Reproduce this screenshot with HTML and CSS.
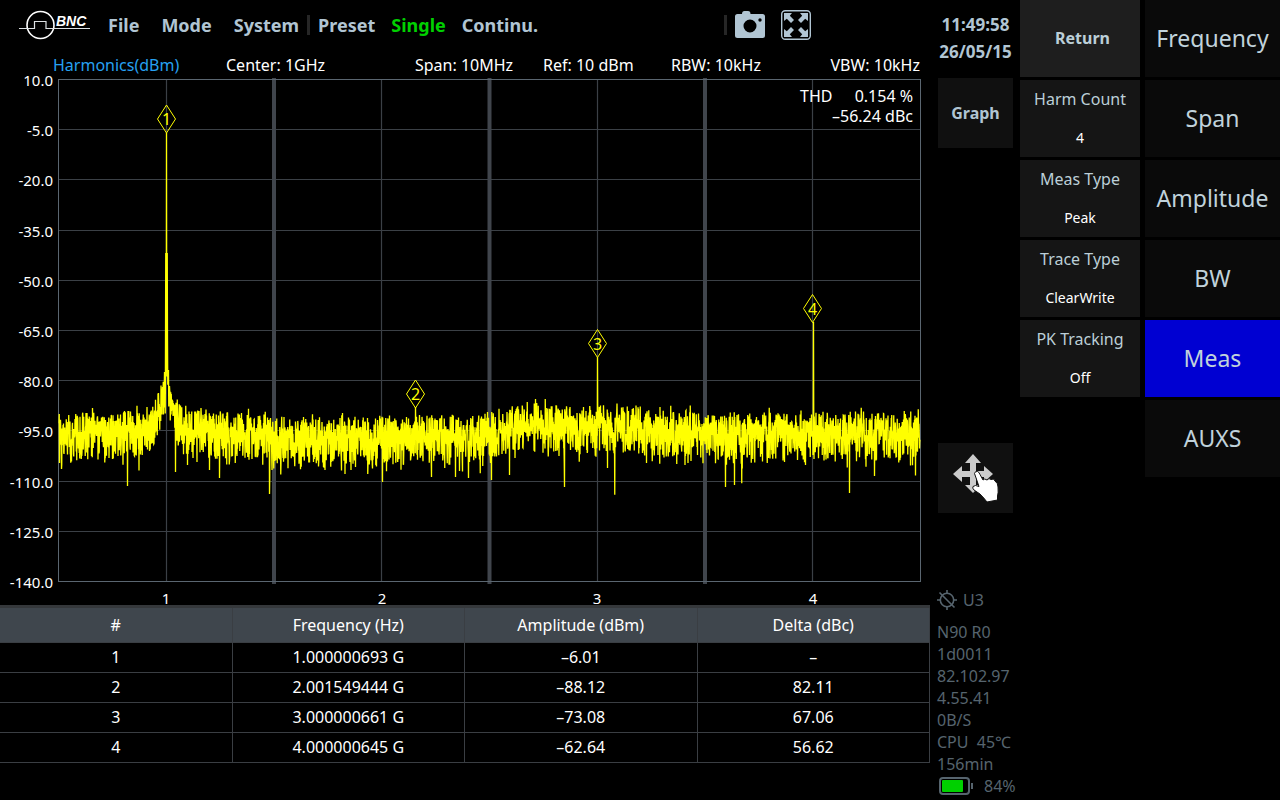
FILE: index.html
```html
<!DOCTYPE html>
<html lang="en">
<head>
<meta charset="utf-8">
<title>Spectrum Analyzer - Harmonics</title>
<link rel="stylesheet" href="styles.css">
</head>
<body>
<div class="analyzer">
  <main class="main">
    <header class="topbar">
      <svg class="logo" width="72" height="30" viewBox="0 0 72 30" role="img" aria-label="BNC">
        <circle cx="21.500" cy="15" r="13.500" fill="none" stroke="#fff" stroke-width="1.600"/>
        <path d="M0 18.500H15.500V11.500H27V18.500H71" fill="none" stroke="#dde1e3" stroke-width="1.200"/>
        <text class="logo-text" x="37" y="16">BNC</text>
      </svg>
      <nav class="menu">
        <button>File</button>
        <button>Mode</button>
        <button>System</button>
      </nav>
      <span class="divider"></span>
      <div class="sweep">
        <button>Preset</button>
        <button class="on">Single</button>
        <button>Continu.</button>
      </div>
      <span class="divider right"></span>
      <button class="icon-button" aria-label="Screenshot">
        <svg width="30" height="30" viewBox="0 0 30 30">
          <path fill="#b1c5d3" fill-rule="evenodd" d="M2.500 4H7Q7 1 9.500 1H13Q15.500 1 15.500 4H27.500Q30 4 30 6.500V25.500Q30 28 27.500 28H2.500Q0 28 0 25.500V6.500Q0 4 2.500 4ZM15 9.500A6.500 6.500 0 1 0 15 22.500A6.500 6.500 0 1 0 15 9.500ZM25 8.300A1.700 1.700 0 1 0 25 11.700A1.700 1.700 0 1 0 25 8.300Z"/>
        </svg>
      </button>
      <button class="icon-button" aria-label="Full screen">
        <svg width="30" height="30" viewBox="0 0 30 30">
          <rect x=".7" y=".7" width="28.600" height="28.600" rx="3.500" fill="none" stroke="#b1c5d3" stroke-width="1.400"/>
          <g fill="#b1c5d3">
            <path id="arrow" d="M3 3H11L8.800 5.800L13 10L10 13L5.800 8.800L3 11Z"/>
            <use href="#arrow" transform="matrix(-1 0 0 1 30 0)"/>
            <use href="#arrow" transform="matrix(1 0 0 -1 0 30)"/>
            <use href="#arrow" transform="matrix(-1 0 0 -1 30 30)"/>
          </g>
        </svg>
      </button>
    </header>

    <div class="info">
      <span class="measure">Harmonics(dBm)</span>
      <span>Center: 1GHz</span>
      <span>Span: 10MHz</span>
      <span>Ref: 10 dBm</span>
      <span>RBW: 10kHz</span>
      <span>VBW: 10kHz</span>
    </div>

    <svg class="chart" viewBox="0 78 930 527" role="img" aria-label="Harmonics spectrum">
      <g id="grid" class="grid"></g>
      <g class="band">
        <path d="M274 78V584M489.500 78V584M705 78V584"/>
      </g>
      <rect class="frame" x="58.500" y="79.500" width="862" height="502"/>
      <g id="levels" class="axis levels"></g>
      <g class="axis harmonics">
        <text x="166" y="604">1</text>
        <text x="382" y="604">2</text>
        <text x="597" y="604">3</text>
        <text x="813" y="604">4</text>
      </g>
      <path id="trace" class="trace"/>
      <g id="markers" class="markers"></g>
      <g class="thd">
        <text x="800" y="102">THD</text>
        <text class="end" x="913" y="102">0.154 %</text>
        <text class="end" x="913" y="122">–56.24 dBc</text>
      </g>
    </svg>

    <table class="results">
      <thead>
        <tr><th>#</th><th>Frequency (Hz)</th><th>Amplitude (dBm)</th><th>Delta (dBc)</th></tr>
      </thead>
      <tbody>
        <tr><td>1</td><td>1.000000693 G</td><td>–6.01</td><td>–</td></tr>
        <tr><td>2</td><td>2.001549444 G</td><td>–88.12</td><td>82.11</td></tr>
        <tr><td>3</td><td>3.000000661 G</td><td>–73.08</td><td>67.06</td></tr>
        <tr><td>4</td><td>4.000000645 G</td><td>–62.64</td><td>56.62</td></tr>
      </tbody>
    </table>
  </main>

  <aside class="side">
    <div class="clock"><time>11:49:58</time><time>26/05/15</time></div>
    <button class="tile">Graph</button>
    <button class="tile move" aria-label="Move">
      <svg width="46" height="50" viewBox="0 0 46 50">
        <path fill="#cbcbcb" d="M20 1L28 10H23V18H31V13L40 21L31 29V24H23V32H28L20 40L12 32H17V24H9V29L0 21L9 13V18H17V10H12Z"/>
        <path fill="#fff" stroke="#111" stroke-width="1" d="M21.500 20.500Q22 18 24.500 18.500Q26 19 27 21.500L30 27Q31.500 25 34 27Q36 24.500 38 26.500Q41 25 42 28Q45 30 45 34Q45.500 40 44.500 43V47L34 49Q31 45 27 41L21 37Q19 35 20 33.500Q22 31.500 26 33.500Z"/>
      </svg>
    </button>
    <div class="status">
      <div class="gps">
        <svg width="20" height="20" viewBox="0 0 20 20" fill="none" stroke="#56646e" stroke-width="1.600">
          <circle cx="10" cy="10" r="6.700"/>
          <path d="M10 0V4M10 16V20M0 10H4M16 10H20M2.500 2.500L17.500 17.500"/>
        </svg>
        <span>U3</span>
      </div>
      <span>N90 R0</span>
      <span>1d0011</span>
      <span>82.102.97</span>
      <span>4.55.41</span>
      <span>0B/S</span>
      <span>CPU  45℃</span>
      <span>156min</span>
      <div class="battery">
        <svg width="34" height="18" viewBox="0 0 34 18">
          <rect x="1" y="1" width="29" height="16" rx="3" fill="none" stroke="#56646e" stroke-width="2"/>
          <rect x="3" y="3" width="21" height="12" rx="1" fill="#00d000"/>
          <path d="M33 6V12" stroke="#56646e" stroke-width="2"/>
        </svg>
        <span>84%</span>
      </div>
    </div>
  </aside>

  <nav class="softkeys">
    <button class="return">Return</button>
    <button><span>Harm Count</span><span class="value">4</span></button>
    <button><span>Meas Type</span><span class="value">Peak</span></button>
    <button><span>Trace Type</span><span class="value">ClearWrite</span></button>
    <button><span>PK Tracking</span><span class="value">Off</span></button>
  </nav>

  <nav class="functions">
    <button>Frequency</button>
    <button>Span</button>
    <button>Amplitude</button>
    <button>BW</button>
    <button class="active">Meas</button>
    <button>AUXS</button>
  </nav>
</div>
<script src="chart.js"></script>
</body>
</html>
```
FILE: styles.css
```css
* { box-sizing: border-box; }

body {
  margin: 0;
  background: #000;
  color: #fff;
  font-family: "Noto Sans", sans-serif;
  font-size: 16px;
  line-height: 22px;
}

button {
  margin: 0;
  padding: 0;
  border: 0;
  background: none;
  color: #b1c5d3;
  font: inherit;
}

svg { display: block; }

.analyzer {
  display: grid;
  grid-template-columns: minmax(0, 1fr) 90px 120px 140px;
  min-height: 100vh;
}

.topbar {
  display: flex;
  align-items: center;
  height: 50px;
  padding-left: 19px;
}

.topbar button {
  font-size: 18px;
  font-weight: 700;
}

.logo-text {
  fill: #fff;
  font: italic bold 14px "Liberation Sans", sans-serif;
}

.menu {
  display: flex;
  gap: 22px;
  margin-left: 17px;
}

.sweep {
  display: flex;
  gap: 16px;
}

.topbar .on { color: #00d000; }

.divider {
  width: 3px;
  height: 20px;
  margin: 0 8px;
  background: #262626;
}

.divider.right { margin-left: auto; }

.icon-button { margin-right: 16px; }

.icon-button:last-child { margin-right: 119px; }

.info {
  display: grid;
  grid-template-columns: 173fr 189fr 128fr 128fr 158fr 91fr;
  height: 28px;
  padding: 4px 10px 0 53px;
  white-space: nowrap;
}

.info span:last-child { justify-self: end; }

.measure { color: #26a0f2; }

.chart {
  width: 100%;
  height: auto;
  overflow: visible;
}

.grid path {
  fill: none;
  stroke: #3b4046;
  stroke-width: 1.2;
}

.band path {
  stroke: #40454c;
  stroke-width: 4;
}

.frame {
  fill: none;
  stroke: #5a6670;
}

.axis {
  fill: #fff;
  font-size: 15px;
}

.levels { text-anchor: end; }

.harmonics { text-anchor: middle; }

.trace {
  fill: none;
  stroke: #ff0;
  stroke-width: 1.3;
}

.markers path {
  fill: none;
  stroke: #ff0;
}

.markers text {
  fill: #ff0;
  font-size: 16px;
  text-anchor: middle;
}

.thd { fill: #fff; }

.thd .end { text-anchor: end; }

.results {
  width: 100%;
  border-top: 3px solid #35383b;
  border-spacing: 0;
  table-layout: fixed;
}

.results th,
.results td {
  height: 30px;
  padding: 0 0 1px;
  border-right: 1px solid #3a3e43;
  border-bottom: 1px solid #3a3e43;
  font-weight: 400;
  text-align: center;
}

.results th {
  height: 35px;
  background: #3f464d;
}

.side {
  display: flex;
  flex-direction: column;
  padding: 11px 0 3px 7px;
}

.clock {
  display: flex;
  flex-direction: column;
  width: 77px;
  margin-bottom: 13px;
  color: #b1c5d3;
  font-size: 17px;
  font-weight: 700;
  line-height: 27px;
  text-align: center;
}

.tile {
  width: 75px;
  height: 70px;
  margin-left: 1px;
  background: #101010;
  font-weight: 700;
}

.move {
  display: grid;
  place-items: center;
  margin-top: 295px;
}

.status {
  display: flex;
  flex-direction: column;
  margin-top: auto;
  color: #56646e;
  white-space: pre;
}

.gps {
  display: flex;
  align-items: center;
  gap: 6px;
  margin-bottom: 10px;
}

.battery {
  display: flex;
  align-items: center;
  gap: 11px;
  padding-left: 2px;
}

.softkeys,
.functions {
  display: flex;
  flex-direction: column;
  gap: 3px;
}

.softkeys button {
  display: flex;
  flex-direction: column;
  align-items: center;
  justify-content: center;
  gap: 17px;
  height: 77px;
  padding-bottom: 1px;
  background: #151515;
  color: #bccfd8;
}

.softkeys .value {
  color: #fff;
  font-size: 14px;
}

.softkeys .return {
  padding-left: 5px;
  background: #1e1e1e;
  font-weight: 700;
}

.functions { margin-left: 5px; }

.functions button {
  height: 77px;
  padding-bottom: 2px;
  background: #0a0a0a;
  color: #c0d2db;
  font-size: 23px;
}

.functions .active { background: #0000d2; }
```
FILE: chart.js
```js
const LEFT = 58.5, TOP = 79.5, RIGHT = 920.5, BOTTOM = 581.5;
const STEP = (BOTTOM - TOP) / 10;
const centers = [166.5, 381.5, 597.5, 812.5];

let grid = "";
let levels = "";
for (let i = 0; i <= 10; i++) {
  const y = Math.floor(TOP + i * STEP) + 0.5;
  if (i > 0 && i < 10) grid += `M${LEFT} ${y}H${RIGHT}`;
  levels += `<text x="53" y="${y + 6}">${(10 - 15 * i).toFixed(1)}</text>`;
}
centers.forEach(x => { grid += `M${x} ${TOP}V${BOTTOM}`; });
document.getElementById("grid").innerHTML = `<path d="${grid}"/>`;
document.getElementById("levels").innerHTML = levels;

let seed = 20260515;
function random() {
  seed = (seed * 1664525 + 1013904223) % 4294967296;
  return (seed + 1) / 4294967297;
}

// Noise floor height along the sweep: [x, y]
const floor = [[58, 429], [250, 430], [290, 436], [400, 435], [480, 431], [530, 422], [640, 425], [720, 432], [920, 429]];
function base(x) {
  let i = 1;
  while (i < floor.length - 1 && x > floor[i][0]) i++;
  const [x0, y0] = floor[i - 1], [x1, y1] = floor[i];
  return y0 + (y1 - y0) * (x - x0) / (x1 - x0);
}

const PER_PIXEL = 4;
const points = [];
for (let x = 59; x <= 920; x += 1 / PER_PIXEL) {
  const power = -(Math.log(random()) + Math.log(random())) / 2;
  const near = Math.exp(-Math.abs(x - 166.5) / 9);
  const skirt = 52 * near;
  let level = -10 * Math.log10(power) * 4.4 * (1 - near * 0.4);
  if (level > 24) level = 24 + (level - 24) * 0.4;
  if (level < -15) level = -15 + (level + 15) * 0.5;
  points.push([x, base(x) - skirt + level]);
}

// Strong single bins: [x, y]
const spikes = [
  [61.5, 469], [127.5, 486], [175.5, 472], [187.5, 465], [209.5, 470], [219.5, 478], [269.5, 494],
  [382.5, 482], [431.5, 477], [455.5, 477], [468.5, 478], [491.5, 480], [509.5, 475], [535.5, 399], [564.5, 487],
  [607.5, 468], [725.5, 487], [734.5, 485], [849.5, 493], [874.5, 476], [415.5, 407],
  [164.5, 372], [165.5, 345], [165.75, 253], [166.5, 133], [167.25, 253], [167.5, 340], [168.5, 370],
  [597.5, 357], [813.5, 322]
];
spikes.forEach(([x, y]) => { points[Math.round((x - 59) * PER_PIXEL)][1] = y; });
document.getElementById("trace").setAttribute("d", "M" + points.map(p => `${p[0]} ${p[1].toFixed(1)}`).join("L"));

const markers = [[166.5, 119], [415.5, 394], [597.5, 343.5], [812.5, 308.5]];
document.getElementById("markers").innerHTML = markers.map(([x, y], i) =>
  `<path d="M${x} ${y - 14}L${x + 9} ${y}L${x} ${y + 14}L${x - 9} ${y}Z"/><text x="${x}" y="${y + 6}">${i + 1}</text>`
).join("");
```
